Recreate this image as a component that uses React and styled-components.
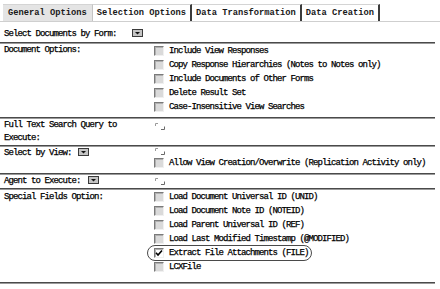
import React from 'react';
import styled, { createGlobalStyle } from 'styled-components';

const GlobalStyle = createGlobalStyle`
  body {
    margin: 0;
    background: #ffffff;
    font-family: "Liberation Mono", "DejaVu Sans Mono", monospace;
    color: #000;
  }
`;

const DropButton = ({ gap }) => (
  <DropIcon $gap={gap} width="11" height="8" viewBox="0 0 11 8">
    <rect x="0.5" y="0.5" width="10" height="7" fill="#c4c4c4" stroke="#3a3a3a" />
    <path d="M3 3 H8 L5.5 5.5 Z" fill="#111" />
  </DropIcon>
);

const FieldMarker = () => (
  <MarkerIcon width="12" height="9" viewBox="0 0 12 9">
    <path d="M1.5 4 V1.5 H4" fill="none" stroke="#9a9a9a" />
    <path d="M7 7.5 H10.5 V4.5" fill="none" stroke="#6a6a6a" />
  </MarkerIcon>
);

const Option = ({ checked, circled, children }) => (
  <OptionRow>
    <OptionInner $circled={circled}>
      <Box $checked={checked}>
        {checked && (
          <svg width="8" height="8" viewBox="0 0 8 8">
            <path d="M1 3.8 L3 6 L7 1.5" fill="none" stroke="#000" strokeWidth="1.6" />
          </svg>
        )}
      </Box>
      {children}
    </OptionInner>
  </OptionRow>
);

const App = () => {
  return (
    <Page>
      <GlobalStyle />
      <TabBar>
        <Tab $first>General Options</Tab>
        <Tab $active>Selection Options</Tab>
        <Tab>Data Transformation</Tab>
        <Tab>Data Creation</Tab>
      </TabBar>

      <WideRow>
        Select Documents by Form:<DropButton gap={15} />
      </WideRow>
      <Rule />

      <Row>
        <Label>Document Options:</Label>
        <Values $pb={3}>
          <Option>Include View Responses</Option>
          <Option>Copy Response Hierarchies (Notes to Notes only)</Option>
          <Option>Include Documents of Other Forms</Option>
          <Option>Delete Result Set</Option>
          <Option>Case-Insensitive View Searches</Option>
        </Values>
      </Row>
      <Rule />

      <Row>
        <Label>Full Text Search Query to<br />Execute:</Label>
        <Values $pt={3}>
          <FieldMarker />
        </Values>
      </Row>
      <Rule />

      <Row>
        <Label>Select by View:<DropButton gap={6} /></Label>
        <Values $pb={3}>
          <FieldMarker />
          <Option>Allow View Creation/Overwrite (Replication Activity only)</Option>
        </Values>
      </Row>
      <Rule />

      <Row>
        <Label>Agent to Execute:<DropButton gap={7} /></Label>
        <Values $pt={2}>
          <FieldMarker />
        </Values>
      </Row>
      <Rule />

      <Row>
        <Label $lh={14}>Special Fields Option:</Label>
        <Values $pb={8}>
          <Option>Load Document Universal ID (UNID)</Option>
          <Option>Load Document Note ID (NOTEID)</Option>
          <Option>Load Parent Universal ID (REF)</Option>
          <Option>Load Last Modified Timestamp (@MODIFIED)</Option>
          <Option checked circled>Extract File Attachments (FILE)</Option>
          <Option>LCXFile</Option>
        </Values>
      </Row>
      <Rule />
    </Page>
  );
};

export default App;

const Page = styled.div`
  width: 440px;
  height: 289px;
  overflow: hidden;
  font-size: 9px;
  letter-spacing: -0.9px;
  -webkit-text-stroke: 0.25px #000;
`;

const TabBar = styled.div`
  display: flex;
  align-items: flex-end;
  padding: 4px 0 0 3px;
  border-bottom: 1px solid #cfcfcf;
`;

const Tab = styled.div`
  font-weight: bold;
  font-size: 8.75px;
  letter-spacing: 0;
  line-height: 16px;
  -webkit-text-stroke: 0;
  padding: 0 ${(p) => (p.$first ? 5 : 4)}px;
  border-top: 1px solid #d4d4d4;
  border-left: ${(p) => (p.$active ? '1px solid #c4c4c4' : 'none')};
  border-right: ${(p) => (p.$first ? 'none' : '2px solid #3c3c3c')};
  background: ${(p) => (p.$first ? '#e4e4e4' : '#ffffff')};
  color: #1a1a1a;
  white-space: nowrap;
`;

const WideRow = styled.div`
  padding: 6px 0 1px 4px;
  height: 13px;
  line-height: 13px;
  white-space: nowrap;
`;

const Rule = styled.div`
  width: 435px;
  height: 0;
  border-top: 1px solid #4a4a4a;
  border-bottom: 1px solid #9a9a9a;
`;

const Row = styled.div`
  display: grid;
  grid-template-columns: 154px 1fr;
  width: 435px;
`;

const Label = styled.div`
  padding-left: 4px;
  line-height: ${(p) => p.$lh || 13}px;
  white-space: nowrap;
`;

const Values = styled.div`
  display: flex;
  flex-direction: column;
  align-items: flex-start;
  padding-top: ${(p) => p.$pt || 0}px;
  padding-bottom: ${(p) => p.$pb || 0}px;
`;

const OptionRow = styled.div`
  height: 14px;
  display: flex;
  align-items: center;
  white-space: nowrap;
`;

const OptionInner = styled.span`
  position: relative;
  display: inline-flex;
  align-items: center;
  gap: 5px;

  &::before {
    content: '';
    display: ${(p) => (p.$circled ? 'block' : 'none')};
    position: absolute;
    top: -3px;
    bottom: -3px;
    left: -7px;
    right: -3px;
    border: 1px solid #4a4a4a;
    border-radius: 9px;
  }
`;

const Box = styled.span`
  box-sizing: border-box;
  width: 10px;
  height: 10px;
  display: inline-flex;
  align-items: center;
  justify-content: center;
  border-top: 1px solid #7a7a7a;
  border-left: 1px solid #7a7a7a;
  border-bottom: 1px solid #f0f0f0;
  border-right: 1px solid #f0f0f0;
  box-shadow: inset 1px 1px 0 #b0b0b0;
  background: ${(p) => (p.$checked ? '#ffffff' : '#dadada')};
`;

const DropIcon = styled.svg`
  display: inline-block;
  vertical-align: middle;
  margin-left: ${(p) => p.$gap}px;
  margin-top: -2px;
`;

const MarkerIcon = styled.svg`
  display: block;
`;
